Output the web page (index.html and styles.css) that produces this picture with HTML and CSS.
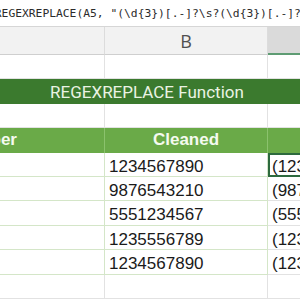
FILE: index.html
```html
<!DOCTYPE html>
<html lang="en">
<head>
    <meta charset="UTF-8">
    <title>REGEXREPLACE</title>
    <link rel="stylesheet" href="styles.css">
</head>
<body>
    <div class="formula">
        <span class="formula-text">=REGEXREPLACE(A5, "(\d{3})[.-]?\s?(\d{3})[.-]?\s?(\d{4})", "($1) $2-$3")</span>
    </div>
    <div class="sheet">
        <div class="grid">
            <div class="col-head">A</div>
            <div class="col-head">B</div>
            <div class="col-head selected">C</div>

            <div class="cell"></div>
            <div class="cell"></div>
            <div class="cell"></div>

            <div class="title">REGEXREPLACE Function</div>

            <div class="cell"></div>
            <div class="cell"></div>
            <div class="cell"></div>

            <div class="head">Phone Number</div>
            <div class="head">Cleaned</div>
            <div class="head">Formatted</div>

            <div class="cell tbl"></div>
            <div class="cell tbl num">1234567890</div>
            <div class="cell num active">(123) 456-7890</div>

            <div class="cell tbl"></div>
            <div class="cell tbl num">9876543210</div>
            <div class="cell num">(987) 654-3210</div>

            <div class="cell tbl"></div>
            <div class="cell tbl num">5551234567</div>
            <div class="cell num">(555) 123-4567</div>

            <div class="cell tbl"></div>
            <div class="cell tbl num">1235556789</div>
            <div class="cell num">(123) 555-6789</div>

            <div class="cell tbl"></div>
            <div class="cell tbl num">1234567890</div>
            <div class="cell num">(123) 456-7890</div>

            <div class="cell"></div>
            <div class="cell"></div>
            <div class="cell"></div>
        </div>
    </div>
</body>
</html>
```

FILE: styles.css
```css
*{
    margin: 0;
    padding: 0;
    box-sizing: border-box;
}
body{
    width: 300px;
    height: 300px;
    overflow: hidden;
    background: #ffffff;
    font-family: "Liberation Sans", Arial, sans-serif;
}
.formula{
    height: 27px;
    border-bottom: 1px solid #d6d6d6;
    overflow: hidden;
    white-space: nowrap;
    background: #ffffff;
}
.formula-text{
    display: block;
    margin-left: -12px;
    padding-top: 5px;
    font-family: "DejaVu Sans Mono", monospace;
    font-size: 11.3px;
    line-height: 18px;
    color: #2b2b2b;
}
.sheet{
    width: 300px;
    height: 273px;
    overflow: hidden;
}
.grid{
    display: grid;
    grid-template-columns: 296px 163px 217px;
    grid-template-rows: 28px;
    grid-auto-rows: 24.4px;
    margin-left: -191px;
    width: 676px;
}
.col-head{
    background: #f2f2f2;
    border-right: 1px solid #dcdcdc;
    border-bottom: 1px solid #cfcfcf;
    display: flex;
    align-items: center;
    justify-content: center;
    font-family: "Open Sans", sans-serif;
    font-size: 18px;
    color: #505050;
    padding-top: 1px;
}
.col-head.selected{
    background: #dadada;
    border-bottom: 2px solid #5e9c73;
    color: #333333;
}
.cell{
    border-right: 1px solid #e2e2e2;
    border-bottom: 1px solid #e2e2e2;
    font-size: 17px;
    color: #1a1a1a;
    white-space: nowrap;
    overflow: hidden;
}
.cell.tbl{
    border-color: #d4e6c8;
}
.num{
    padding: 5px 0 0 4px;
    line-height: 18px;
}
.active{
    outline: 2px solid #2d6a3e;
    outline-offset: -2px;
}
.title{
    grid-column: 1 / 4;
    background: #3b7a2e;
    color: #eaf3e3;
    font-family: Roboto, sans-serif;
    font-size: 17px;
    display: flex;
    align-items: center;
    justify-content: center;
}
.head{
    background: #6aaa48;
    border-right: 1px solid #8bc26d;
    color: #f4faef;
    font-weight: bold;
    font-size: 17px;
    display: flex;
    align-items: center;
    justify-content: center;
}
```
